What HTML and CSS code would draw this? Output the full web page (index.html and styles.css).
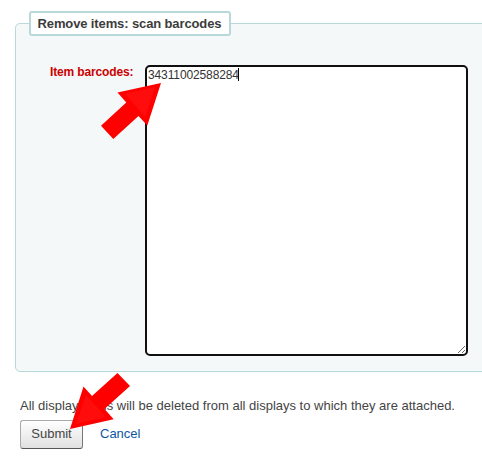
FILE: index.html
```
<!DOCTYPE html>
<html lang="en">
<head>
<meta charset="utf-8">
<title>Remove items</title>
<link rel="stylesheet" href="styles.css">
</head>
<body>
<form class="page">
  <fieldset class="panel">
    <legend class="legend">Remove items: scan barcodes</legend>
    <div class="row">
      <label class="label" for="barcodes">Item barcodes:</label>
      <div class="field">
        <textarea id="barcodes" class="barcodes" spellcheck="false">34311002588284</textarea>
        <span class="caret"></span>
      </div>
    </div>
  </fieldset>
  <p class="note">All display items will be deleted from all displays to which they are attached.</p>
  <div class="actions">
    <button class="submit" type="button">Submit</button>
    <a class="cancel" href="#">Cancel</a>
  </div>
</form>
<svg class="arrows" width="482" height="469" viewBox="0 0 482 469" aria-hidden="true">
  <path d="M161 83L117.5 92.5L126.3 102.5L101 125.7L113.3 139L138.5 116L147.3 125.6Z"/>
  <path d="M70 429L83.5 386.5L92 396L117.5 373L130 386L104.5 409L113.7 419.3Z"/>
  <path class="shine" d="M155 87L125 94L145 117Z"/>
  <path class="shine" d="M76 424L86 395L106 417Z"/>
</svg>
</body>
</html>
```
FILE: styles.css
```
* { box-sizing: border-box; }
body {
  margin: 0;
  width: 482px;
  height: 469px;
  overflow: hidden;
  position: relative;
  background: #fff;
  color: #444;
  font: 13px "Liberation Sans", Arial, sans-serif;
}
.page { padding: 11px 0 0 15px; }
.panel {
  width: 490px;
  height: 361px;
  margin: 0;
  padding: 29px 0 0 34px;
  border: 1px solid #b9d8d9;
  border-radius: 5px;
  background: #f4f8f9;
}
.legend {
  width: 202px;
  height: 25px;
  margin-left: -21px;
  padding: 0 0 0 6.5px;
  border: 2px solid #b9d8d9;
  border-radius: 3px;
  background: #fff;
  color: #3c3c3c;
  font-weight: bold;
  line-height: 21px;
  letter-spacing: -0.12px;
  white-space: nowrap;
}
.row { display: flex; }
.label {
  width: 95px;
  color: #c00;
  font-size: 12px;
  font-weight: bold;
  line-height: 14px;
  letter-spacing: -0.14px;
}
.field { position: relative; height: 291px; }
.barcodes {
  display: block;
  width: 323px;
  height: 291px;
  padding: 1px;
  border: 2px solid #101010;
  border-radius: 5px;
  outline: none;
  background: #fff;
  color: #333;
  font: 12px/15px "Liberation Sans", Arial, sans-serif;
  letter-spacing: -0.12px;
  resize: both;
}
.caret {
  position: absolute;
  left: 93px;
  top: 3px;
  width: 1px;
  height: 13px;
  background: #000;
}
.note { margin: 26px 0 0 5px; line-height: 16px; white-space: nowrap; }
.actions { display: flex; align-items: center; gap: 17px; margin: 6px 0 0 5px; }
.submit {
  width: 63px;
  height: 29px;
  padding: 0 0 2px;
  border: 1px solid;
  border-color: #aaa #777 #555 #aaa;
  border-radius: 3px;
  background: linear-gradient(#fff, #e0e0e0);
  color: #444;
  font: 13px "Liberation Sans", Arial, sans-serif;
}
.cancel { padding-bottom: 2px; color: #0d56a3; text-decoration: none; }
.arrows { position: absolute; left: 0; top: 0; fill: #f00; }
.shine { fill: #ff0c0c; }
```
